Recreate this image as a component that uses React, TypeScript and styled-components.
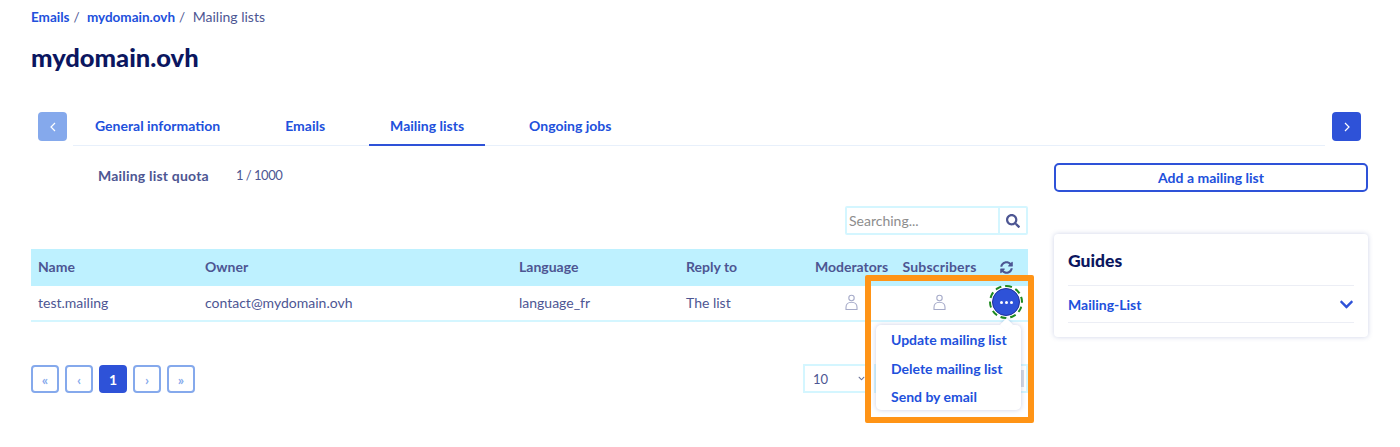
import React from "react";
import styled, { createGlobalStyle } from "styled-components";
import { FaChevronDown, FaSearch, FaSyncAlt } from "react-icons/fa";

const BLUE = "#2e52d8";
const LINK = "#2150dc";
const NAVY = "#0b1660";
const TEXT = "#4d5693";
const SKY = "#bef1ff";
const PALE = "#d4f6ff";
const SOFT = "#85a9ec";

const GlobalStyle = createGlobalStyle`
  html, body {
    margin: 0;
    background: #fff;
    font-family: Lato, "Noto Sans", sans-serif;
    font-size: 14px;
    color: ${TEXT};
  }
  * { box-sizing: border-box; }
`;

const Page = styled("div")`
  width: 1400px;
  height: 447px;
  padding: 8px 32px 0 31px;
  overflow: hidden;
`;

const Breadcrumb = styled("nav")`
  display: flex;
  gap: 4px;
  height: 18px;
  line-height: 18px;
  font-size: 13.5px;
`;

const Crumb = styled("a")`
  color: ${LINK};
  font-weight: 700;
`;

const CurrentCrumb = styled("span")`
  font-size: 14px;
`;

const Title = styled("h1")`
  margin: 17px 0 0;
  height: 30px;
  line-height: 28px;
  font-size: 25.500px;
  font-weight: 900;
  color: ${NAVY};
`;

const TabsRow = styled("div")`
  display: flex;
  align-items: flex-start;
  margin-top: 38px;
  padding: 0 7px;
  height: 35px;
`;

const ArrowButton = styled("button")<{ $faded?: boolean }>`
  display: flex;
  align-items: center;
  justify-content: center;
  flex: none;
  width: 29px;
  height: 29px;
  margin-top: 1px;
  padding: 0;
  border: 0;
  border-radius: 4px;
  background: ${(p) => (p.$faded ? SOFT : BLUE)};
  color: #fff;
`;

const TabList = styled("div")`
  display: flex;
  gap: 23px;
  flex: 1;
  height: 35px;
  margin: 0 7px 0 6px;
  padding-left: 1px;
  border-bottom: 1px solid #e8f0fb;
`;

const Tab = styled("a")<{ $active?: boolean }>`
  display: flex;
  align-items: center;
  height: 35px;
  padding: 0 21px 4px;
  color: ${LINK};
  font-size: 14px;
  font-weight: 700;
  border-bottom: 2px solid ${(p) => (p.$active ? BLUE : "transparent")};
`;

const Columns = styled("div")`
  display: flex;
  gap: 26px;
  margin-top: 16px;
`;

const MainColumn = styled("div")`
  position: relative;
  width: 997px;
`;

const SideColumn = styled("aside")`
  width: 314px;
  padding-top: 1px;
`;

const Quota = styled("div")`
  display: flex;
  height: 26px;
  align-items: center;
  padding-left: 67px;
`;

const QuotaLabel = styled("span")`
  width: 138px;
  font-weight: 700;
  letter-spacing: 0.2px;
`;

const QuotaValue = styled("span")`
  font-size: 13px;
  letter-spacing: -0.5px;
`;

const SearchBar = styled("div")`
  display: flex;
  width: 183px;
  height: 29px;
  margin: 18px 0 14px auto;
  border: 2px solid ${PALE};
  border-radius: 2px;
`;

const SearchInput = styled("div")`
  flex: 1;
  padding-left: 2px;
  line-height: 26px;
  color: #8d8d8d;
  font-size: 14px;
`;

const SearchButton = styled("div")`
  display: flex;
  align-items: center;
  justify-content: center;
  width: 28px;
  border-left: 2px solid ${PALE};
  color: ${TEXT};
  font-size: 14px;
`;

const Table = styled("table")`
  width: 997px;
  border-collapse: collapse;
  table-layout: fixed;
`;

const HeadCell = styled("th")<{ $center?: boolean }>`
  height: 37px;
  padding: 0 7px 2px;
  background: ${SKY};
  text-align: ${(p) => (p.$center ? "center" : "left")};
  font-weight: 700;
  font-size: 14px;
  white-space: nowrap;
`;

const Cell = styled("td")<{ $center?: boolean }>`
  height: 35px;
  padding: 0 7px 2px;
  border-bottom: 2px solid ${PALE};
  text-align: ${(p) => (p.$center ? "center" : "left")};
  font-size: 14px;
`;

const Footer = styled("div")`
  display: flex;
  justify-content: space-between;
  align-items: flex-start;
  margin-top: 43px;
`;

const Pagination = styled("div")`
  display: flex;
  gap: 6px;
`;

const PageButton = styled("button")<{ $current?: boolean }>`
  width: 28px;
  height: 28px;
  padding: 0;
  border: 2px solid ${(p) => (p.$current ? BLUE : SOFT)};
  border-radius: 4px;
  background: ${(p) => (p.$current ? BLUE : "#fff")};
  color: ${(p) => (p.$current ? "#fff" : SOFT)};
  font-family: inherit;
  font-size: 14px;
  font-weight: 700;
`;

const PageSize = styled("div")`
  display: flex;
  gap: 9px;
  margin-top: -1px;
`;

const SizeSelect = styled("div")`
  display: flex;
  align-items: center;
  justify-content: space-between;
  width: 62px;
  height: 29px;
  padding: 0 0 0 8px;
  border: 2px solid ${PALE};
  border-right: 0;
  font-size: 13px;
`;

const SizeRange = styled("div")`
  position: relative;
  width: 154px;
  height: 29px;
  border: 2px solid ${PALE};
`;

const RangeThumb = styled("span")`
  position: absolute;
  right: 2px;
  top: 4px;
  width: 3px;
  height: 17px;
  background: #d5d9e3;
`;

const Highlight = styled("div")`
  position: absolute;
  left: 834px;
  top: 113px;
  width: 169px;
  height: 148px;
  border: 6px solid #ff9416;
  border-radius: 2px;
  pointer-events: none;
`;

const ActionButton = styled("button")`
  display: inline-flex;
  align-items: center;
  justify-content: center;
  gap: 2px;
  width: 28px;
  height: 28px;
  padding: 0;
  vertical-align: middle;
  border: 1px solid #1d2f9c;
  border-radius: 50%;
  background: ${BLUE};
  outline: 2px dashed #1f8a1f;
  outline-offset: 1px;
`;

const Dot = styled("i")`
  width: 3px;
  height: 3px;
  border-radius: 50%;
  background: #fff;
`;

const Menu = styled("ul")`
  position: absolute;
  left: 845px;
  top: 163px;
  width: 145px;
  height: 85px;
  margin: 0;
  padding: 1px 0 0;
  list-style: none;
  border-radius: 5px;
  background: #fff;
  box-shadow: 0 0 5px rgba(60, 80, 160, 0.28);

  &::before {
    content: "";
    position: absolute;
    top: -5px;
    right: 10px;
    width: 9px;
    height: 9px;
    background: #fff;
    transform: rotate(45deg);
    box-shadow: -1px -1px 2px rgba(60, 80, 160, 0.15);
  }
`;

const MenuItem = styled("li")`
  position: relative;
  height: 28.500px;
  line-height: 28px;
  padding-left: 15px;
  color: ${LINK};
  font-size: 14px;
  font-weight: 700;
  white-space: nowrap;
`;

const AddButton = styled("button")`
  display: block;
  width: 314px;
  height: 29px;
  padding: 0;
  border: 2px solid ${BLUE};
  border-radius: 5px;
  background: #fff;
  color: ${LINK};
  font-family: inherit;
  font-size: 14px;
  font-weight: 700;
`;

const GuidesCard = styled("section")`
  margin-top: 42px;
  height: 103px;
  padding: 0 14px;
  border-radius: 4px;
  background: #fff;
  box-shadow: 0 0 5px rgba(60, 80, 160, 0.25);
`;

const GuidesTitle = styled("h2")`
  margin: 0;
  height: 52px;
  line-height: 53px;
  color: ${NAVY};
  font-size: 17.500px;
  font-weight: 900;
  border-bottom: 1px solid #eceef5;
`;

const GuideRow = styled("div")`
  display: flex;
  align-items: center;
  justify-content: space-between;
  height: 37px;
  color: ${LINK};
  font-weight: 700;
  font-size: 14px;
  border-bottom: 1px solid #eceef5;
`;

const Refresh = styled(FaSyncAlt)`
  vertical-align: -2px;
  font-size: 13px;
`;

const SubscribersLabel = styled("span")`
  letter-spacing: 0.2px;
`;

const PersonIcon = () => (
  <svg width="13" height="17" viewBox="0 0 13 17" fill="none" stroke="#a6abc9" strokeWidth="1.1" style={{ verticalAlign: "middle" }}>
    <circle cx="6.5" cy="4" r="2.7" />
    <path d="M1 15.5h11v-2.2c0-3-2-5-5.500-5s-5.500 2-5.500 5z" />
  </svg>
);

const Chevron = ({ flip }: { flip?: boolean }) => (
  <svg width="8" height="12" viewBox="0 0 8 12" fill="none" stroke="#fff" strokeWidth="1.2">
    <path d={flip ? "M2 2l4 4-4 4" : "M6 2L2 6l4 4"} />
  </svg>
);

const columns = [167, 314, 167, 129, 87, 89, 44];

export default function App() {
  return (
    <Page>
      <GlobalStyle />
      <Breadcrumb>
        <Crumb>Emails</Crumb>
        <span>/</span>
        <Crumb>&nbsp;mydomain.ovh</Crumb>
        <span>/</span>
        <CurrentCrumb>&nbsp;Mailing lists</CurrentCrumb>
      </Breadcrumb>
      <Title>mydomain.ovh</Title>
      <TabsRow>
        <ArrowButton $faded>
          <Chevron />
        </ArrowButton>
        <TabList>
          <Tab>General information</Tab>
          <Tab>Emails</Tab>
          <Tab $active>Mailing lists</Tab>
          <Tab>Ongoing jobs</Tab>
        </TabList>
        <ArrowButton>
          <Chevron flip />
        </ArrowButton>
      </TabsRow>
      <Columns>
        <MainColumn>
          <Quota>
            <QuotaLabel>Mailing list quota</QuotaLabel>
            <QuotaValue>1 / 1000</QuotaValue>
          </Quota>
          <SearchBar>
            <SearchInput>Searching...</SearchInput>
            <SearchButton>
              <FaSearch />
            </SearchButton>
          </SearchBar>
          <Table>
            <colgroup>
              {columns.map((w, i) => (
                <col key={i} style={{ width: w }} />
              ))}
            </colgroup>
            <thead>
              <tr>
                <HeadCell>Name</HeadCell>
                <HeadCell>Owner</HeadCell>
                <HeadCell>Language</HeadCell>
                <HeadCell>Reply to</HeadCell>
                <HeadCell $center>Moderators</HeadCell>
                <HeadCell $center>
                  <SubscribersLabel>Subscribers</SubscribersLabel>
                </HeadCell>
                <HeadCell $center>
                  <Refresh />
                </HeadCell>
              </tr>
            </thead>
            <tbody>
              <tr>
                <Cell>test.mailing</Cell>
                <Cell>contact@mydomain.ovh</Cell>
                <Cell>language_fr</Cell>
                <Cell>The list</Cell>
                <Cell $center>
                  <PersonIcon />
                </Cell>
                <Cell $center>
                  <PersonIcon />
                </Cell>
                <Cell $center>
                  <ActionButton>
                    <Dot />
                    <Dot />
                    <Dot />
                  </ActionButton>
                </Cell>
              </tr>
            </tbody>
          </Table>
          <Footer>
            <Pagination>
              <PageButton>«</PageButton>
              <PageButton>‹</PageButton>
              <PageButton $current>1</PageButton>
              <PageButton>›</PageButton>
              <PageButton>»</PageButton>
            </Pagination>
            <PageSize>
              <SizeSelect>
                10
                <FaChevronDown size={7} color="#6a7299" />
              </SizeSelect>
              <SizeRange>
                <RangeThumb />
              </SizeRange>
            </PageSize>
          </Footer>
          <Highlight />
          <Menu>
            <MenuItem>Update mailing list</MenuItem>
            <MenuItem>Delete mailing list</MenuItem>
            <MenuItem>Send by email</MenuItem>
          </Menu>
        </MainColumn>
        <SideColumn>
          <AddButton>Add a mailing list</AddButton>
          <GuidesCard>
            <GuidesTitle>Guides</GuidesTitle>
            <GuideRow>
              Mailing-List
              <FaChevronDown size={15} color={BLUE} />
            </GuideRow>
          </GuidesCard>
        </SideColumn>
      </Columns>
    </Page>
  );
}
